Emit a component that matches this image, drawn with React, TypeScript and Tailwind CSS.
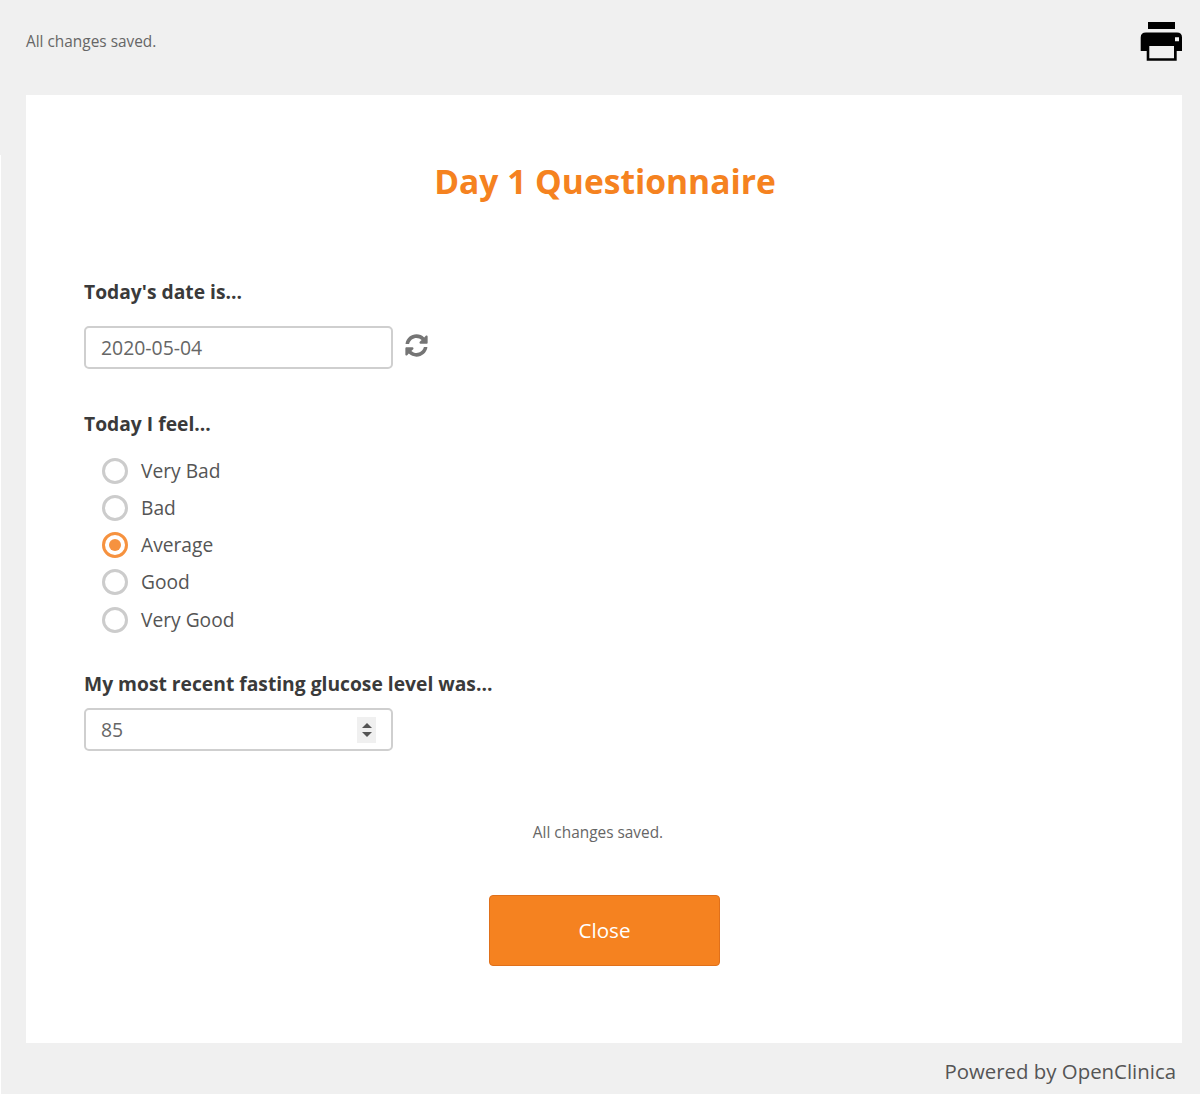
import { FaSyncAlt } from "react-icons/fa";

const options = ["Very Bad", "Bad", "Average", "Good", "Very Good"];

function PrinterIcon() {
  return (
    <svg width="43" height="39" viewBox="0 0 43 39" className="mt-[22px] text-black" aria-hidden="true">
      <rect x="8" y="0" width="27" height="7" fill="currentColor" />
      <path
        fill="currentColor"
        fillRule="evenodd"
        d="M6 10.5H37Q42 10.5 42 15.5V29H36.7V38.7H6.7V29H0.7V15.5Q0.7 10.5 6 10.5ZM9.3 24V36.3H34V24ZM35 15.3V19.3H39V15.3Z"
      />
    </svg>
  );
}

function Radio({ label, checked }: { label: string; checked: boolean }) {
  return (
    <div className="flex h-[37.25px] items-center">
      <span
        className={
          checked
            ? "flex h-[26px] w-[26px] items-center justify-center rounded-full border-[3px] border-[#f6923f] bg-white"
            : "flex h-[26px] w-[26px] items-center justify-center rounded-full border-[3px] border-[#cccccc] bg-white"
        }
      >
        {checked && <span className="h-[12px] w-[12px] rounded-full bg-[#f6923f]" />}
      </span>
      <span className="ml-[13px] text-[19.2px] leading-[28px] text-[#555555]">{label}</span>
    </div>
  );
}

export default function App() {
  return (
    <div className="relative flex h-[1094px] w-full flex-col bg-[#f0f0f0] font-['Open_Sans',sans-serif]">
      <span className="absolute bottom-0 left-0 top-[155px] w-px bg-white" />
      <header className="flex h-[95px] shrink-0 items-start justify-between pl-[26px] pr-[17px]">
        <p className="mt-[31px] text-[15.4px] leading-[21px] text-[#666666]">All changes saved.</p>
        <PrinterIcon />
      </header>
      <main className="mx-[18px] ml-[26px] flex h-[948px] flex-col bg-white px-[58px]">
        <h1 className="pl-[2px] pt-[63px] text-center text-[33.6px] font-bold leading-[46px] text-[#f58220]">
          Day 1 Questionnaire
        </h1>
        <h2 className="mt-[75px] text-[19.25px] font-bold leading-[26px] text-[#3a3a3a]">Today's date is...</h2>
        <div className="mt-[21px] flex items-center">
          <div className="flex h-[43px] w-[309px] items-center rounded-[5px] border-2 border-[#cfcfcf] bg-white pl-[15px] text-[19.4px] text-[#666666]">
            2020-05-04
          </div>
          <FaSyncAlt className="-mt-[4px] ml-[12px] text-[#757575]" size={23} />
        </div>
        <h2 className="mt-[42px] text-[19.25px] font-bold leading-[26px] text-[#3a3a3a]">Today I feel...</h2>
        <div className="ml-[18px] mt-[15px]">
          {options.map((o) => (
            <Radio key={o} label={o} checked={o === "Average"} />
          ))}
        </div>
        <h2 className="mt-[33px] text-[19.25px] font-bold leading-[26px] text-[#3a3a3a]">
          My most recent fasting glucose level was...
        </h2>
        <div className="mt-[11px] flex h-[43px] w-[309px] items-center justify-between rounded-[5px] border-2 border-[#cfcfcf] bg-white pl-[15px] pr-[15px] text-[19.4px] text-[#666666]">
          85
          <span className="flex h-[26px] w-[19px] flex-col items-center justify-center gap-[4px] bg-[#f0f0f0]">
            <span className="h-0 w-0 border-x-[5px] border-b-[5px] border-x-transparent border-b-[#555555]" />
            <span className="h-0 w-0 border-x-[5px] border-t-[5px] border-x-transparent border-t-[#555555]" />
          </span>
        </div>
        <p className="mt-[71px] pr-[12px] text-center text-[15.4px] leading-[21px] text-[#666666]">All changes saved.</p>
        <div className="mt-[52px] flex justify-center">
          <button className="ml-[1px] h-[71px] w-[231px] rounded-[4px] border border-[#e0701a] bg-[#f58220] text-[20.6px] text-white">
            Close
          </button>
        </div>
      </main>
      <footer className="flex flex-1 items-center justify-end pr-[24px] pt-[6px] text-[20.4px] text-[#555555]">
        Powered by OpenClinica
      </footer>
    </div>
  );
}
